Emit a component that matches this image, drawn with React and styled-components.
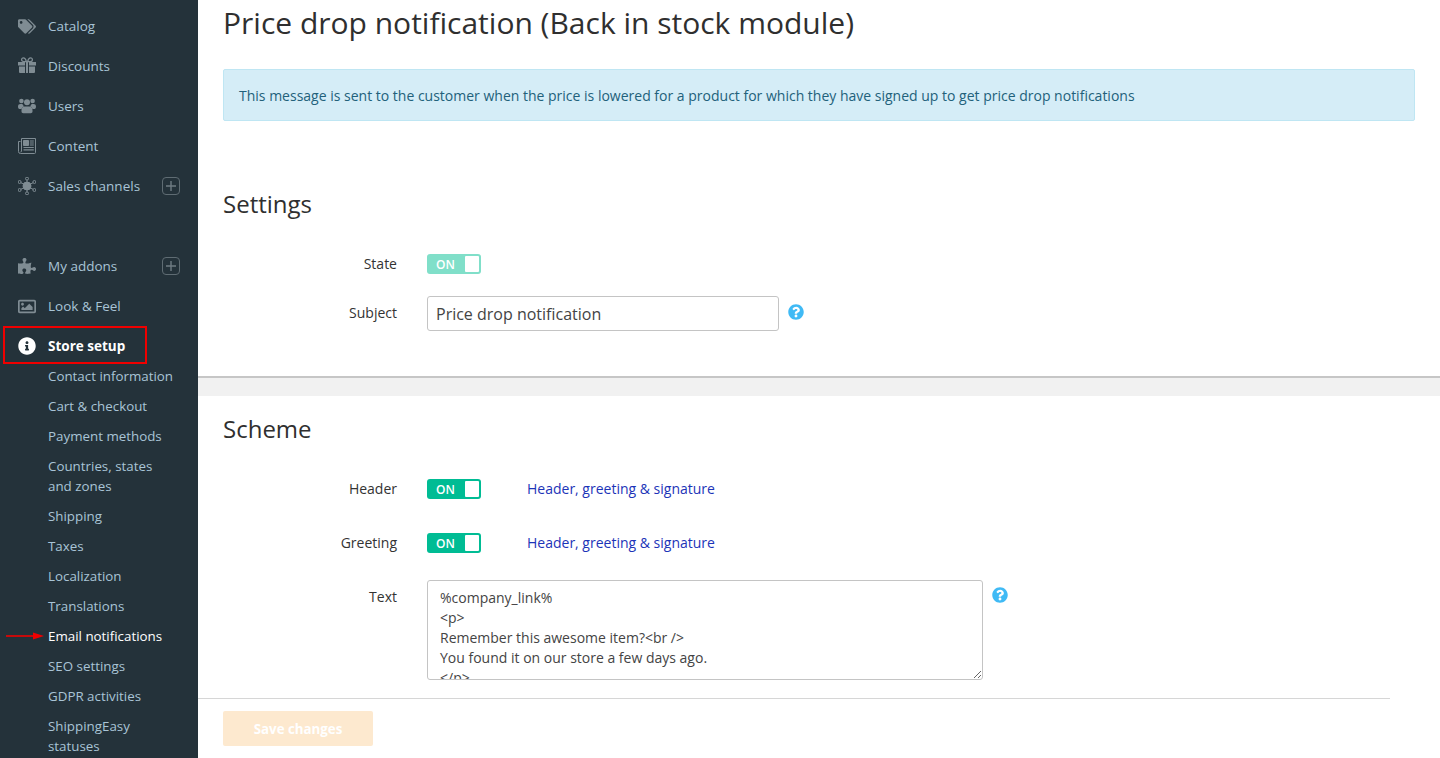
import React from 'react'
import styled, { createGlobalStyle } from 'styled-components'
import {
    FaTags,
    FaPuzzlePiece,
    FaRegImage,
    FaInfoCircle,
    FaQuestionCircle,
} from 'react-icons/fa'

const textValue = `%company_link%
<p>
Remember this awesome item?<br />
You found it on our store a few days ago.
</p>
<p>
Good news: the price has dropped!
</p>`

function GiftIcon() {
    return (
        <svg width="18" height="18" viewBox="0 0 18 18" fill="currentColor">
            <path d="M0 5h7v3.6H0zM11 5h7v3.6h-7zM1 9.6h6V16H2a1 1 0 0 1-1-1zM11 9.6h6V15a1 1 0 0 1-1 1h-5z" />
            <path d="M8 5h2v11H8z" />
            <path d="M8.4 4.6H6C4.6 4.6 3.6 3.8 3.6 2.7 3.6 1.6 4.4.9 5.4.9c1.4 0 2.4 1.5 3 3.7zM9.6 4.6H12c1.4 0 2.4-.8 2.4-1.9C14.4 1.6 13.6.9 12.6.9c-1.4 0-2.4 1.5-3 3.7z" fill="none" stroke="currentColor" strokeWidth="1.3" />
        </svg>
    )
}

function UsersIcon() {
    return (
        <svg width="18" height="18" viewBox="0 0 18 18" fill="currentColor">
            <circle cx="3.4" cy="4" r="2.3" />
            <circle cx="14.6" cy="4" r="2.3" />
            <circle cx="9" cy="5.2" r="3" />
            <path d="M0 9.6C0 7.8 1 7 2.4 7h2c.3.9.9 1.7 1.7 2.2-1.3.5-2.3 1.5-2.6 2.8H1.4C.6 12 0 11 0 9.6zM18 9.6c0-1.8-1-2.6-2.4-2.6h-2c-.3.9-.9 1.7-1.7 2.2 1.3.5 2.3 1.5 2.6 2.8h2.1c.8 0 1.4-1 1.4-2.4z" />
            <path d="M6.6 9.4h4.8c2 0 3.1 1.5 3.1 3.6v1.6c0 1-.7 1.7-1.8 1.7H5.3c-1.1 0-1.8-.7-1.8-1.7V13c0-2.1 1.1-3.6 3.1-3.6z" />
        </svg>
    )
}

function NewsIcon() {
    return (
        <svg width="18" height="18" viewBox="0 0 18 18" fill="none" stroke="currentColor" strokeWidth="1">
            <path d="M3.5 1.5h14v14a1 1 0 0 1-1 1h-14a2 2 0 0 1-2-2V4.5h2" />
            <path d="M3.5 1.5v12.5a1 1 0 0 1-1 1" />
            <path d="M5.5 3.5h5v5h-5z" fill="currentColor" />
            <path d="M11.8 4h4M11.8 6h4M11.8 8h4M5.5 10.5h10.3M5.5 12.8h10.3" strokeWidth="1.2" />
        </svg>
    )
}

function ChannelsIcon() {
    return (
        <svg width="18" height="18" viewBox="0 0 18 18" fill="none" stroke="currentColor" strokeWidth="1">
            <circle cx="9" cy="9" r="4" fill="currentColor" />
            <circle cx="9" cy="1.6" r="1.5" />
            <circle cx="9" cy="16.4" r="1.5" />
            <circle cx="1.6" cy="5" r="1.5" />
            <circle cx="16.4" cy="5" r="1.5" />
            <circle cx="1.6" cy="13" r="1.5" />
            <circle cx="16.4" cy="13" r="1.5" />
            <path d="M9 3.1V6M9 12v2.9M2.9 5.7 6 7.4M15.1 5.7 12 7.4M2.9 12.3 6 10.6M15.1 12.3 12 10.6" />
        </svg>
    )
}

function PlusBox() {
    return (
        <AddButton>
            <svg width="10" height="10" viewBox="0 0 10 10" stroke="currentColor" strokeWidth="1.4">
                <path d="M5 0v10M0 5h10" />
            </svg>
        </AddButton>
    )
}

function Toggle({ faded }) {
    return (
        <Switch $faded={faded}>
            <SwitchLabel>ON</SwitchLabel>
            <SwitchKnob />
        </Switch>
    )
}

function Help({ top }) {
    return (
        <HelpIcon $top={top}>
            <FaQuestionCircle size={16} />
        </HelpIcon>
    )
}

export default function App() {
    return (
        <>
            <GlobalStyle />
            <Page>
                <Sidebar>
                    <MenuItem><MenuIcon><FaTags size={19} /></MenuIcon><MenuText>Catalog</MenuText></MenuItem>
                    <MenuItem><MenuIcon><GiftIcon /></MenuIcon><MenuText>Discounts</MenuText></MenuItem>
                    <MenuItem><MenuIcon><UsersIcon /></MenuIcon><MenuText>Users</MenuText></MenuItem>
                    <MenuItem><MenuIcon><NewsIcon /></MenuIcon><MenuText>Content</MenuText></MenuItem>
                    <MenuItem><MenuIcon><ChannelsIcon /></MenuIcon><MenuText>Sales channels</MenuText><PlusBox /></MenuItem>
                    <MenuGap />
                    <MenuItem><MenuIcon><FaPuzzlePiece size={18} /></MenuIcon><MenuText>My addons</MenuText><PlusBox /></MenuItem>
                    <MenuItem><MenuIcon><FaRegImage size={19} /></MenuIcon><MenuText>Look &amp; Feel</MenuText></MenuItem>
                    <ActiveItem>
                        <MenuIcon $active><FaInfoCircle size={20} /></MenuIcon><MenuText>Store setup</MenuText>
                        <RedFrame />
                    </ActiveItem>
                    <SubItem>Contact information</SubItem>
                    <SubItem>Cart &amp; checkout</SubItem>
                    <SubItem>Payment methods</SubItem>
                    <SubItem>Countries, states<br />and zones</SubItem>
                    <SubItem>Shipping</SubItem>
                    <SubItem>Taxes</SubItem>
                    <SubItem>Localization</SubItem>
                    <SubItem>Translations</SubItem>
                    <SubItem $current>
                        <RedArrow width="38" height="8" viewBox="0 0 38 8">
                            <path d="M0 4h30" stroke="#f00000" strokeWidth="1.6" />
                            <path d="M38 4 27 .4v7.2z" fill="#f00000" />
                        </RedArrow>
                        Email notifications
                    </SubItem>
                    <SubItem>SEO settings</SubItem>
                    <SubItem>GDPR activities</SubItem>
                    <SubItem>ShippingEasy<br />statuses</SubItem>
                </Sidebar>
                <Main>
                    <Scroll>
                        <Title>Price drop notification (Back in stock module)</Title>
                        <Alert>This message is sent to the customer when the price is lowered for a product for which they have signed up to get price drop notifications</Alert>
                        <SettingsHeading>Settings</SettingsHeading>
                        <FormRow $height={20} $top={32}>
                            <Label>State</Label>
                            <Toggle faded />
                        </FormRow>
                        <FormRow $height={35} $top={22}>
                            <Label $raise={2}>Subject</Label>
                            <TextInput readOnly value="Price drop notification" />
                            <Help top={8} />
                        </FormRow>
                        <Band />
                        <SchemeHeading>Scheme</SchemeHeading>
                        <FormRow $height={20} $top={32}>
                            <Label>Header</Label>
                            <Toggle />
                            <SchemeLink>Header, greeting &amp; signature</SchemeLink>
                        </FormRow>
                        <FormRow $height={20} $top={34}>
                            <Label>Greeting</Label>
                            <Toggle />
                            <SchemeLink>Header, greeting &amp; signature</SchemeLink>
                        </FormRow>
                        <FormRow $height={100} $top={27} $start>
                            <Label $start>Text</Label>
                            <TextArea readOnly value={textValue} />
                            <Help top={7} />
                        </FormRow>
                    </Scroll>
                    <Footer>
                        <SaveButton>Save changes</SaveButton>
                    </Footer>
                </Main>
            </Page>
        </>
    )
}

const GlobalStyle = createGlobalStyle`
    html, body {
        margin: 0;
        padding: 0;
        height: 100%;
        overflow: hidden;
        background: #fff;
    }
    * {
        box-sizing: border-box;
    }
    body {
        font-family: "Open Sans", "Liberation Sans", sans-serif;
        font-size: 14px;
        color: #2f2f2f;
    }
`

const Page = styled.div`
    display: flex;
    width: 1440px;
    height: 758px;
    overflow: hidden;
`

const Sidebar = styled.nav`
    position: relative;
    flex: 0 0 198px;
    height: 758px;
    padding-top: 6px;
    background: #24323a;
    color: #a9c4d6;
    overflow: hidden;
`

const MenuItem = styled.div`
    display: flex;
    align-items: center;
    height: 40px;
    padding-left: 18px;
    font-size: 13.5px;
`

const MenuText = styled.span`
    line-height: 20px;
`

const MenuIcon = styled.span`
    display: flex;
    align-items: center;
    justify-content: center;
    width: 18px;
    height: 18px;
    margin-right: 12px;
    color: ${(p) => (p.$active ? '#fff' : '#7f8c93')};
`

const AddButton = styled.span`
    display: flex;
    align-items: center;
    justify-content: center;
    width: 18px;
    height: 18px;
    margin-left: auto;
    margin-right: 18px;
    border: 1px solid #5f6c73;
    border-radius: 4px;
    color: #6f7c83;
`

const MenuGap = styled.div`
    height: 40px;
`

const ActiveItem = styled(MenuItem)`
    position: relative;
    color: #fff;
    font-weight: 700;
    margin-bottom: -5px;
`

const RedFrame = styled.span`
    position: absolute;
    left: 3px;
    top: 0;
    width: 144px;
    height: 38px;
    border: 2px solid #f00000;
`

const SubItem = styled.div`
    position: relative;
    padding: 5px 0 5px 48px;
    font-size: 13.35px;
    line-height: 20px;
    color: ${(p) => (p.$current ? '#fff' : '#a9c4d6')};
`

const RedArrow = styled.svg`
    position: absolute;
    left: 6px;
    top: 11px;
`

const Main = styled.main`
    flex: 1;
    display: flex;
    flex-direction: column;
    height: 758px;
    min-width: 0;
`

const Scroll = styled.div`
    flex: 1;
    min-height: 0;
    overflow: hidden;
`

const Title = styled.h1`
    margin: 0;
    padding: 0 0 0 25px;
    height: 69px;
    font-size: 30px;
    line-height: 46px;
    font-weight: 400;
    color: #2f2f2f;
`

const Alert = styled.div`
    margin: 0 25px;
    height: 52px;
    padding: 0 15px;
    display: flex;
    align-items: center;
    background: #d5edf7;
    border: 1px solid #bfe6f3;
    border-radius: 2px;
    color: #22617b;
    font-size: 14px;
`

const SettingsHeading = styled.h2`
    margin: 65px 0 0;
    padding-left: 25px;
    height: 36px;
    font-size: 24px;
    line-height: 36px;
    font-weight: 400;
    color: #2f2f2f;
`

const SchemeHeading = styled(SettingsHeading)`
    margin-top: 15px;
`

const FormRow = styled.div`
    display: flex;
    align-items: ${(p) => (p.$start ? 'flex-start' : 'center')};
    height: ${(p) => p.$height}px;
    margin-top: ${(p) => p.$top}px;
`

const Label = styled.label`
    flex: 0 0 199px;
    margin-right: 30px;
    text-align: right;
    font-size: 14px;
    line-height: 20px;
    color: #333;
    padding-top: ${(p) => (p.$start ? '7px' : '0')};
    margin-bottom: ${(p) => (p.$raise ? `${p.$raise}px` : '0')};
`

const Switch = styled.span`
    display: flex;
    align-items: center;
    justify-content: space-between;
    width: 54px;
    height: 20px;
    padding: 2px 2px 2px 9px;
    border-radius: 3px;
    background: ${(p) => (p.$faded ? '#80dfc9' : '#00bc94')};
`

const SwitchLabel = styled.span`
    color: #fff;
    font-size: 12px;
    font-weight: 600;
`

const SwitchKnob = styled.span`
    width: 14px;
    height: 16px;
    background: #fff;
    border-radius: 1px;
`

const TextInput = styled.input`
    width: 352px;
    height: 35px;
    padding: 0 8px;
    border: 1px solid #c4c4c4;
    border-radius: 3px;
    font-family: inherit;
    font-size: 16px;
    color: #444;
    outline: none;
    background: #fff;
`

const HelpIcon = styled.span`
    display: flex;
    align-self: flex-start;
    margin-left: 9px;
    margin-top: ${(p) => p.$top}px;
    color: #40baf5;
`

const Band = styled.div`
    height: 20px;
    margin-top: 45px;
    background: #f1f1f1;
    border-top: 2px solid #c6c6c6;
`

const SchemeLink = styled.a`
    margin-left: 46px;
    font-size: 14px;
    line-height: 20px;
    margin-bottom: 1px;
    color: #1c34b8;
`

const TextArea = styled.textarea`
    display: block;
    width: 556px;
    height: 100px;
    padding: 7px 12px;
    border: 1px solid #c4c4c4;
    border-radius: 3px;
    font-family: inherit;
    font-size: 14px;
    line-height: 20px;
    color: #444;
    outline: none;
    overflow: hidden;
    background: #fff;
`

const Footer = styled.footer`
    flex: 0 0 60px;
    margin-right: 50px;
    padding: 12px 0 0 25px;
    border-top: 1px solid #d6d6d6;
    background: #fff;
`

const SaveButton = styled.button`
    display: block;
    width: 150px;
    height: 35px;
    border: 0;
    border-radius: 2px;
    background: #fde9cf;
    color: #fff;
    font-family: inherit;
    font-size: 13.3px;
    font-weight: 700;
`
